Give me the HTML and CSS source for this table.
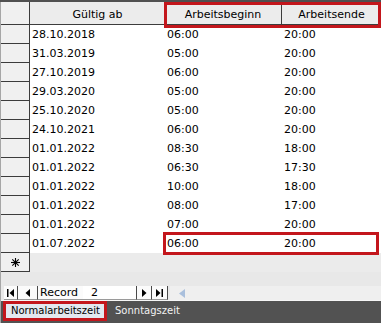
FILE: index.html
```html
<!DOCTYPE html>
<html>
<head>
<meta charset="utf-8">
<link rel="stylesheet" href="styles.css">
</head>
<body>
<div class="app">
  <div class="topbar"></div>
  <div class="sheet">
    <div class="grid">
      <div class="row head">
        <div class="rh"></div>
        <div class="hc">Gültig ab</div>
        <div class="hc">Arbeitsbeginn</div>
        <div class="hc last">Arbeitsende</div>
      </div>
      <div class="row"><div class="rh"></div><div class="c">28.10.2018</div><div class="c">06:00</div><div class="c c3">20:00</div></div>
      <div class="row"><div class="rh"></div><div class="c">31.03.2019</div><div class="c">05:00</div><div class="c c3">20:00</div></div>
      <div class="row"><div class="rh"></div><div class="c">27.10.2019</div><div class="c">06:00</div><div class="c c3">20:00</div></div>
      <div class="row"><div class="rh"></div><div class="c">29.03.2020</div><div class="c">05:00</div><div class="c c3">20:00</div></div>
      <div class="row"><div class="rh"></div><div class="c">25.10.2020</div><div class="c">05:00</div><div class="c c3">20:00</div></div>
      <div class="row"><div class="rh"></div><div class="c">24.10.2021</div><div class="c">06:00</div><div class="c c3">20:00</div></div>
      <div class="row"><div class="rh"></div><div class="c">01.01.2022</div><div class="c">08:30</div><div class="c c3">18:00</div></div>
      <div class="row"><div class="rh"></div><div class="c">01.01.2022</div><div class="c">06:30</div><div class="c c3">17:30</div></div>
      <div class="row"><div class="rh"></div><div class="c">01.01.2022</div><div class="c">10:00</div><div class="c c3">18:00</div></div>
      <div class="row"><div class="rh"></div><div class="c">01.01.2022</div><div class="c">08:00</div><div class="c c3">17:00</div></div>
      <div class="row"><div class="rh"></div><div class="c">01.01.2022</div><div class="c">07:00</div><div class="c c3">20:00</div></div>
      <div class="row"><div class="rh"></div><div class="c">01.07.2022</div><div class="c">06:00</div><div class="c c3">20:00</div></div>
      <div class="row newrow">
        <div class="rh star">
          <svg width="9" height="9" viewBox="0 0 9 9"><g stroke="#000" stroke-width="1.1"><line x1="4.5" y1="0" x2="4.5" y2="9"/><line x1="0" y1="4.5" x2="9" y2="4.5"/><line x1="1.3" y1="1.3" x2="7.7" y2="7.7"/><line x1="7.7" y1="1.3" x2="1.3" y2="7.7"/></g></svg>
        </div>
        <div class="c"></div><div class="c"></div><div class="c"></div>
      </div>
      <div class="mark mark-head"></div>
      <div class="mark mark-row"></div>
    </div>
    <div class="filler"></div>
    <div class="nav">
      <div class="navbtn first">
        <svg width="7" height="8" viewBox="0 0 7 8"><rect x="0" y="0" width="1.5" height="8" fill="#000"/><polygon points="7,0 7,8 2.5,4" fill="#000"/></svg>
      </div>
      <div class="navbtn prev">
        <svg width="5" height="8" viewBox="0 0 5 8"><polygon points="5,0 5,8 0.5,4" fill="#000"/></svg>
      </div>
      <div class="reclabel">Record</div>
      <div class="recfield">2</div>
      <div class="navbtn next">
        <svg width="5" height="8" viewBox="0 0 5 8"><polygon points="0,0 0,8 4.5,4" fill="#000"/></svg>
      </div>
      <div class="navbtn lastb">
        <svg width="7" height="8" viewBox="0 0 7 8"><polygon points="0,0 0,8 4.5,4" fill="#000"/><rect x="5.5" y="0" width="1.5" height="8" fill="#000"/></svg>
      </div>
      <div class="hscroll">
        <svg width="6" height="9" viewBox="0 0 6 9"><polygon points="6,0 6,9 0,4.5" fill="#a9bfdc"/></svg>
      </div>
    </div>
    <div class="sep"></div>
    <div class="tabs">
      <div class="tab active">Normalarbeitszeit</div>
      <div class="tab">Sonntagszeit</div>
    </div>
  </div>
</div>
</body>
</html>
```
FILE: styles.css
```css
* { box-sizing: border-box; }
html, body { margin: 0; padding: 0; }
body {
  width: 381px;
  height: 323px;
  overflow: hidden;
  background: #e8e8e8;
  font-family: "DejaVu Sans", Verdana, sans-serif;
  font-size: 11px;
  color: #000;
}
.topbar { height: 2px; background: #505050; }
.sheet { border-left: 1px solid #a6a6a6; }
.grid { position: relative; }
.row {
  display: grid;
  grid-template-columns: 29px 135px 116px 100px;
  height: 19px;
  background: #fff;
}
.rh {
  background: #f0f0f0;
  border-right: 1px solid #3c3c3c;
  border-bottom: 1px solid #3c3c3c;
}
.c {
  padding-left: 2px;
  line-height: 19px;
  white-space: nowrap;
}
.c3 { padding-left: 3px; }
.row.head { height: 23px; background: #ececec; }
.hc {
  border-bottom: 1px solid #3c3c3c;
  text-align: center;
  padding-top: 5px;
  line-height: 15px;
  white-space: nowrap;
}
.hc.last { border-left: 1px solid #3c3c3c; }
.newrow { background: #ebebeb; }
.star { display: flex; align-items: center; justify-content: center; }
.mark {
  position: absolute;
  border: 3px solid #c3161c;
}
.mark-head { left: 163px; top: 0; right: 0; height: 26px; }
.mark-row { left: 162px; top: 230px; width: 216px; height: 23px; }
.filler { height: 14px; }
.nav {
  height: 14px;
  display: flex;
  align-items: stretch;
  padding-left: 3px;
}
.navbtn {
  display: flex;
  align-items: center;
  justify-content: center;
  background: #fbfbfb;
  border-right: 1px solid #4a4a4a;
  border-bottom: 1px solid #9a9a9a;
}
.first { width: 14px; }
.prev { width: 20px; }
.next { width: 16px; border-left: 1px solid #4a4a4a; }
.lastb { width: 16px; }
.reclabel {
  width: 45px;
  padding-left: 2px;
  line-height: 14px;
  background: #fbfbfb;
  border-bottom: 1px solid #9a9a9a;
}
.recfield {
  width: 53px;
  padding-left: 8px;
  line-height: 14px;
  background: #fff;
  border-bottom: 1px solid #9a9a9a;
}
.hscroll {
  flex: 1;
  margin-left: 2px;
  background: #efefef;
  display: flex;
  align-items: center;
  padding-left: 9px;
}
.sep { height: 1px; background: #f6f6f6; }
.tabs {
  height: 22px;
  background: #525252;
  display: flex;
  align-items: flex-start;
  padding-left: 2px;
  font-size: 10px;
}
.tab {
  color: #f2f2f2;
  line-height: 20px;
  padding-left: 8px;
  white-space: nowrap;
}
.tab.active {
  color: #000;
  background: #e3e8ef;
  border: 3px solid #c3161c;
  width: 104px;
  height: 20px;
  line-height: 14px;
  padding-left: 5px;
}
```
